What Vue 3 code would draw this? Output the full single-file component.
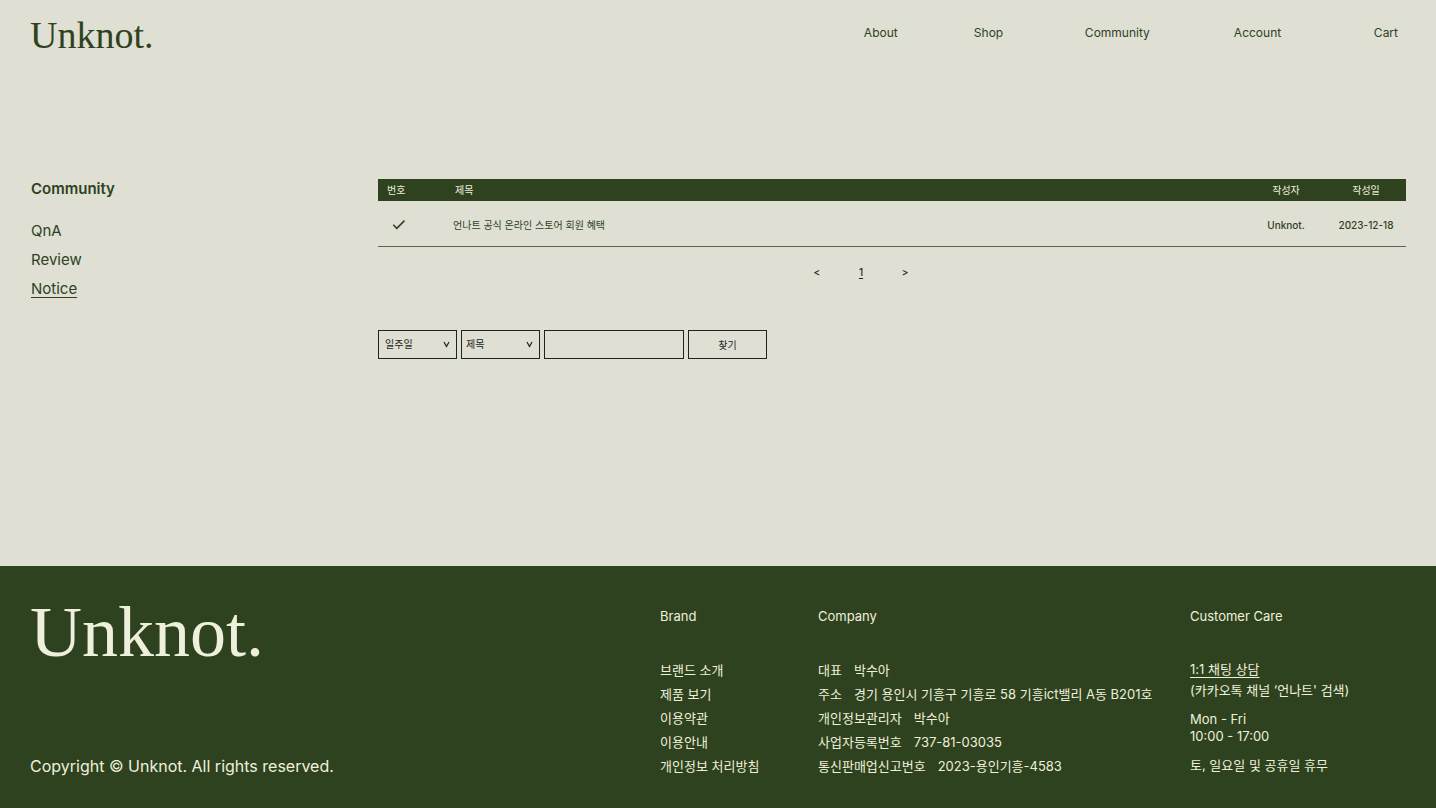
<script setup>
import { ref } from 'vue'

const nav = ['About', 'Shop', 'Community', 'Account', 'Cart']
const side = ['QnA', 'Review', 'Notice']
const current = 'Notice'
const posts = [{ title: '언나트 공식 온라인 스토어 회원 혜택', author: 'Unknot.', date: '2023-12-18' }]
const period = ref('일주일')
const field = ref('제목')
const keyword = ref('')
const brand = ['브랜드 소개', '제품 보기', '이용약관', '이용안내', '개인정보 처리방침']
const company = [
  ['대표', '박수아'],
  ['주소', '경기 용인시 기흥구 기흥로 58 기흥ict밸리 A동 B201호'],
  ['개인정보관리자', '박수아'],
  ['사업자등록번호', '737-81-03035'],
  ['통신판매업신고번호', '2023-용인기흥-4583'],
]
</script>

<template>
  <div class="page">
    <header class="top">
      <a class="logo" href="#">Unknot.</a>
      <nav class="nav" aria-label="Main">
        <a v-for="n in nav" :key="n" href="#">{{ n }}</a>
      </nav>
    </header>

    <div class="body">
      <aside class="side">
        <h1>Community</h1>
        <nav aria-label="Community">
          <a v-for="s in side" :key="s" href="#" :class="{ on: s === current }">{{ s }}</a>
        </nav>
      </aside>

      <main>
        <table>
          <thead>
            <tr>
              <th class="no">번호</th>
              <th class="title">제목</th>
              <th class="author">작성자</th>
              <th class="date">작성일</th>
            </tr>
          </thead>
          <tbody>
            <tr v-for="p in posts" :key="p.title">
              <td class="no">
                <svg width="14" height="12" viewBox="0 0 14 12" aria-hidden="true">
                  <path d="M1.3 5.8 4.8 9.3 12.5 1.6" fill="none" stroke="currentColor" stroke-width="1.6" />
                </svg>
              </td>
              <td class="title"><a href="#">{{ p.title }}</a></td>
              <td class="author">{{ p.author }}</td>
              <td class="date">{{ p.date }}</td>
            </tr>
          </tbody>
        </table>

        <nav class="pager" aria-label="Pages">
          <button type="button">&lt;</button>
          <a href="#">1</a>
          <button type="button">&gt;</button>
        </nav>

        <form class="search" @submit.prevent>
          <span class="pick">
            <select v-model="period" class="period" aria-label="기간">
              <option>일주일</option>
            </select>
            <svg width="7" height="7" viewBox="0 0 7 7" aria-hidden="true"><path d="M1 1 3.5 5.6 6 1" /></svg>
          </span>
          <span class="pick">
            <select v-model="field" class="field" aria-label="검색 항목">
              <option>제목</option>
            </select>
            <svg width="7" height="7" viewBox="0 0 7 7" aria-hidden="true"><path d="M1 1 3.5 5.6 6 1" /></svg>
          </span>
          <input v-model="keyword" type="text" aria-label="검색어" />
          <button type="submit">찾기</button>
        </form>
      </main>
    </div>

    <footer class="foot">
      <div class="own">
        <a class="logo big" href="#">Unknot.</a>
        <p>Copyright © Unknot. All rights reserved.</p>
      </div>
      <section>
        <h2>Brand</h2>
        <ul>
          <li v-for="b in brand" :key="b"><a href="#">{{ b }}</a></li>
        </ul>
      </section>
      <section>
        <h2>Company</h2>
        <dl>
          <div v-for="c in company" :key="c[0]">
            <dt>{{ c[0] }}</dt>
            <dd>{{ c[1] }}</dd>
          </div>
        </dl>
      </section>
      <section class="care">
        <h2>Customer Care</h2>
        <p><a class="chat" href="#">1:1 채팅 상담</a><br />(카카오톡 채널 ‘언나트' 검색)</p>
        <p class="hours">Mon - Fri<br />10:00 - 17:00</p>
        <p>토, 일요일 및 공휴일 휴무</p>
      </section>
    </footer>
  </div>
</template>

<style>
body {
  margin: 0;
  background: #dfdfd3;
}
</style>

<style scoped>
.page {
  min-height: 100vh;
  display: flex;
  flex-direction: column;
  background: #dfdfd3;
  color: #2e421f;
  font-family: Inter, "Noto Sans CJK KR", sans-serif;
  font-size: 13px;
}
a {
  color: inherit;
  text-decoration: none;
}
h1, h2, p, ul, dl, dd {
  margin: 0;
  padding: 0;
}
ul {
  list-style: none;
}
button, select, input {
  font: inherit;
  color: #20251b;
  background: none;
  border-radius: 0;
  box-sizing: border-box;
  margin: 0;
}
.logo {
  font-family: "Liberation Serif", serif;
  font-size: 38px;
  line-height: 40px;
}
.top {
  display: flex;
  justify-content: space-between;
  align-items: flex-start;
  padding: 15px 38px 0 30px;
}
.nav {
  display: grid;
  grid-template-columns: 110px 111px 149px 140px auto;
  padding-top: 8px;
  font-size: 12px;
  line-height: 20px;
}
.body {
  flex: 1;
  display: grid;
  grid-template-columns: 347px minmax(0, 1fr);
  padding: 124px 30px 40px 31px;
}
.side h1 {
  font-size: 15px;
  line-height: 20px;
  font-weight: 600;
}
.side nav {
  display: flex;
  flex-direction: column;
  align-items: flex-start;
  gap: 9px;
  margin-top: 22px;
}
.side nav a {
  font-size: 15px;
  line-height: 20px;
}
.on, .pager a, .chat {
  text-decoration: underline;
  text-underline-offset: 3px;
  text-decoration-thickness: 1px;
}
table {
  width: 100%;
  table-layout: fixed;
  border-collapse: collapse;
  font-size: 10px;
  line-height: 16px;
}
th {
  height: 22px;
  padding: 0;
  background: #2e421f;
  color: #eef0dc;
  font-weight: 400;
}
td {
  height: 43px;
  padding: 2px 0 0;
  border-bottom: 1px solid #5a6650;
}
.no {
  width: 75px;
  text-align: left;
}
th.no {
  padding-left: 9px;
  width: 66px;
}
td.no {
  padding-left: 14px;
}
td svg {
  display: block;
}
.title {
  text-align: left;
}
th.title {
  padding-left: 2px;
}
.author, .date {
  width: 80px;
  text-align: center;
}
td.author, td.date {
  font-weight: 500;
}
.pager {
  display: flex;
  justify-content: center;
  gap: 36px;
  margin: 17px 62px 0 0;
  font-size: 10px;
  line-height: 16px;
  font-weight: 500;
  color: #20251b;
}
.pager a {
  text-underline-offset: 2px;
}
.pager button {
  border: 0;
  padding: 0;
  width: 12px;
}
.search {
  display: flex;
  gap: 4px;
  margin-top: 50px;
  font-size: 10px;
}
.pick {
  position: relative;
}
.pick svg {
  position: absolute;
  right: 7px;
  top: 11px;
  fill: none;
  stroke: #20251b;
  stroke-width: 1.2;
  pointer-events: none;
}
.search select, .search input, .search button {
  display: block;
  width: 79px;
  height: 29px;
  border: 1px solid #20251b;
  padding: 0 0 1px;
}
.search select {
  appearance: none;
}
.search .period {
  padding-left: 6px;
}
.search .field {
  padding-left: 4px;
}
.search input {
  width: 140px;
  padding: 0 6px;
}
.foot {
  display: grid;
  grid-template-columns: 630fr 158fr 372fr 216fr;
  padding: 30px;
  background: #2e421f;
  color: #eef0dc;
}
.own {
  display: flex;
  flex-direction: column;
  justify-content: space-between;
}
.big {
  font-size: 72px;
  line-height: 72px;
}
.own p {
  font-size: 16px;
  line-height: 24px;
}
h2 {
  font-size: 13px;
  line-height: 20px;
  font-weight: 400;
  margin: 10px 0 32px;
}
li, dl div {
  line-height: 24px;
  white-space: nowrap;
}
dl div {
  display: flex;
  gap: 12px;
}
.care {
  line-height: 21px;
}
.care h2 {
  margin-bottom: 33px;
}
.care p {
  white-space: nowrap;
}
.care .hours {
  line-height: 17px;
  margin: 10px 0;
}
</style>
